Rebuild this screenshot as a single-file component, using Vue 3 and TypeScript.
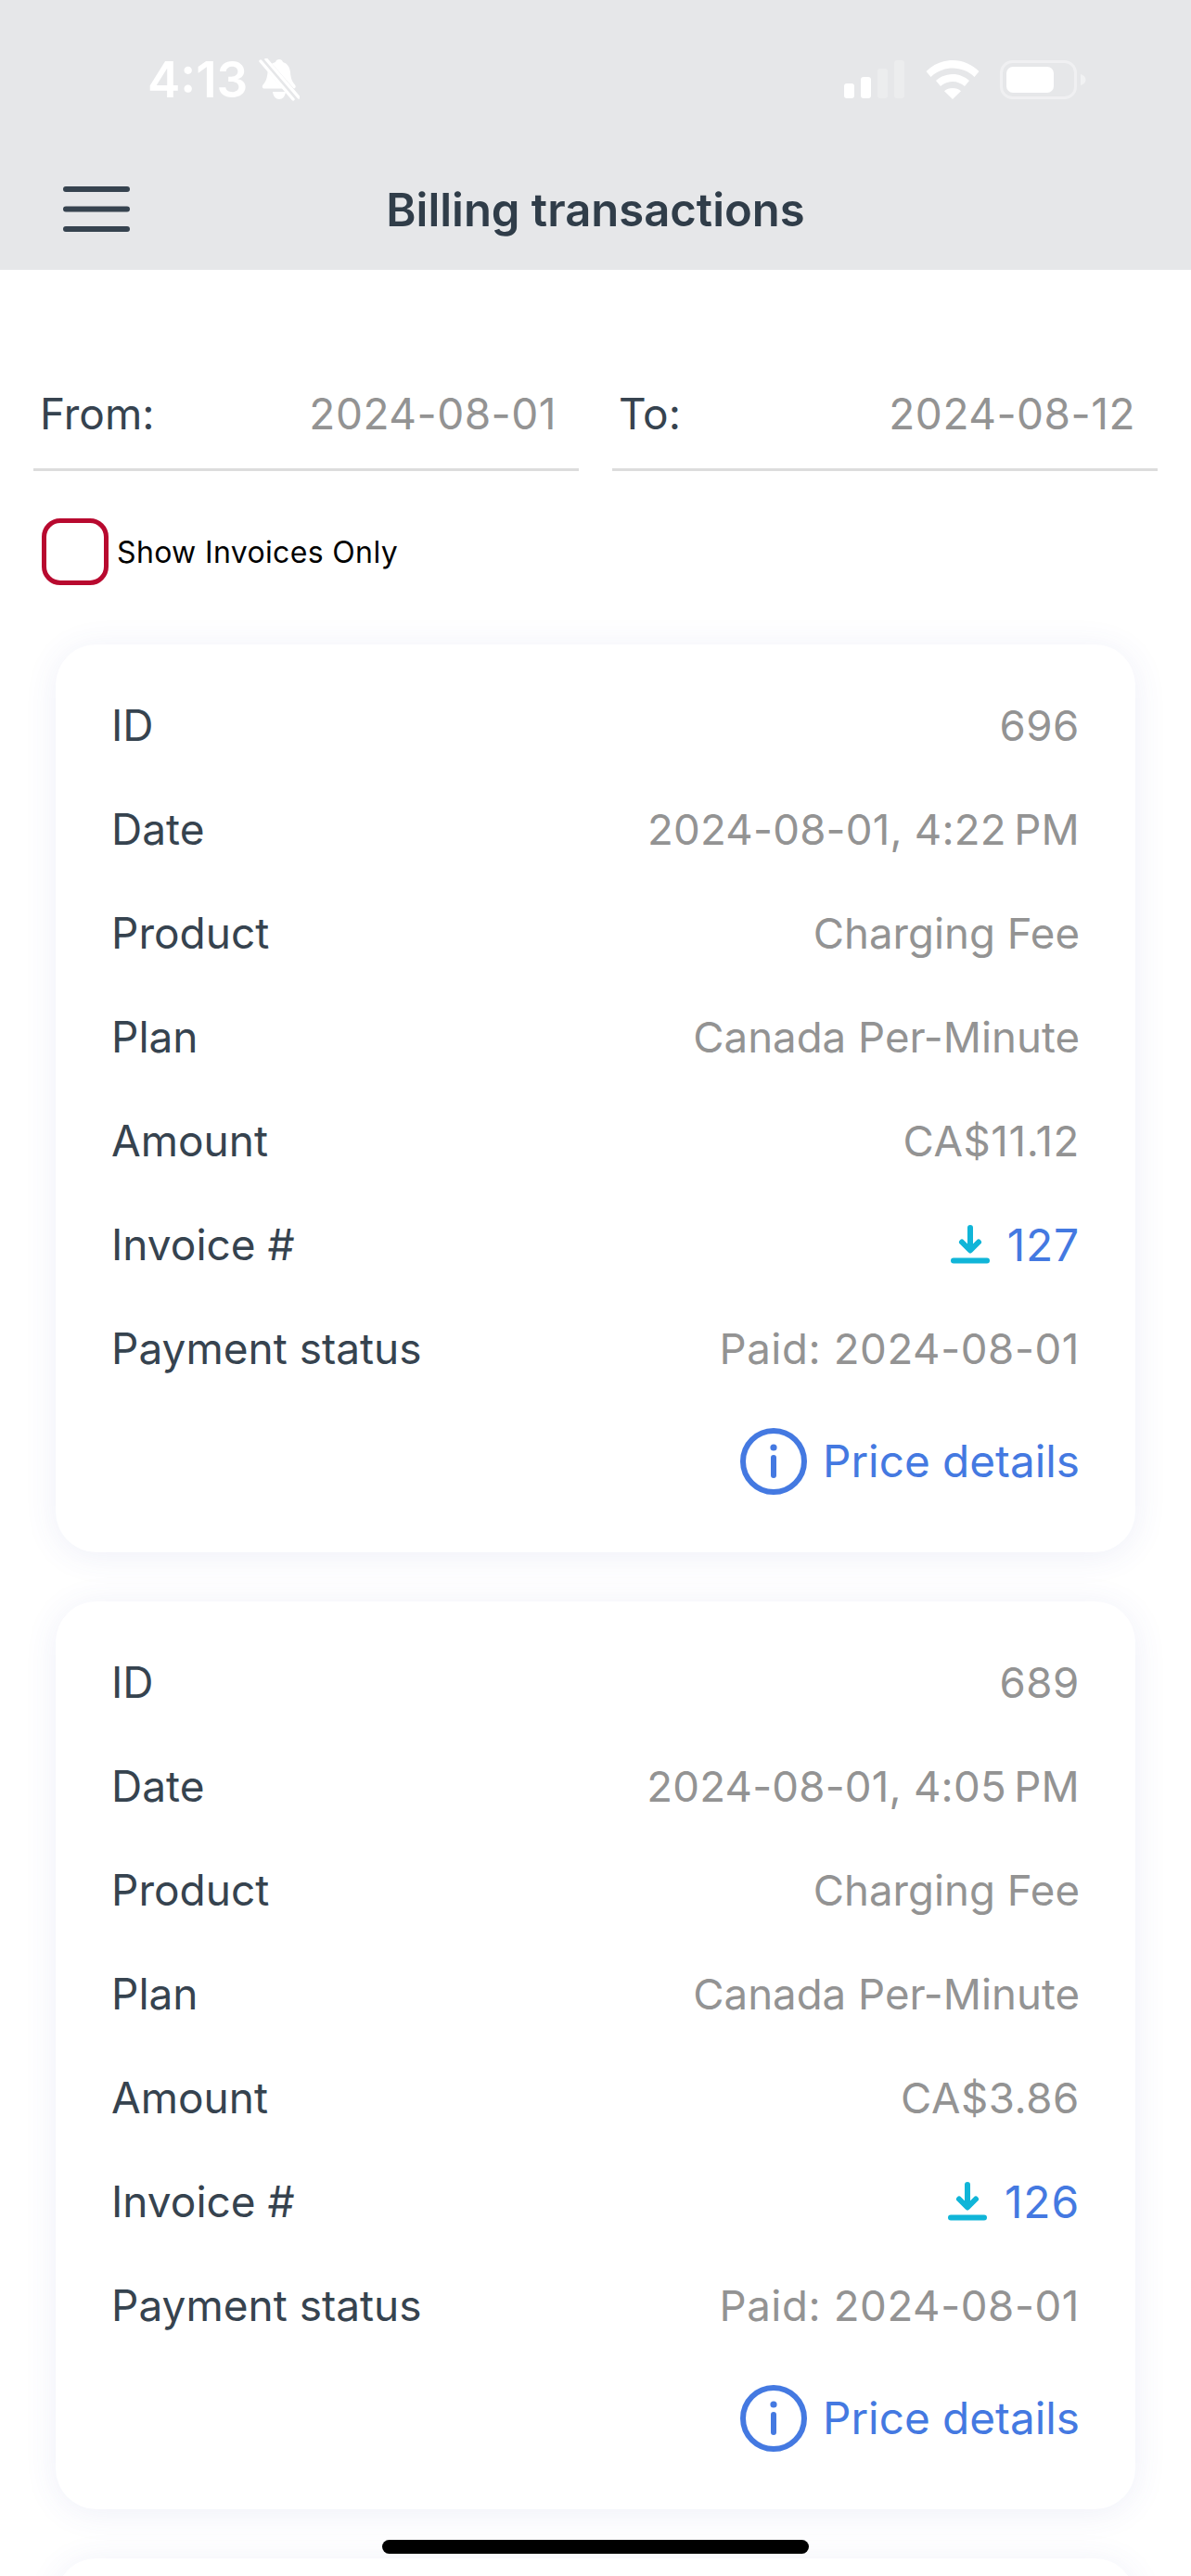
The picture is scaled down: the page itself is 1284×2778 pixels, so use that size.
<template>
  <div class="screen">
    <header class="app-header">
      <div class="status-bar">
        <div class="status-left">
          <span class="clock">4:13</span>
          <svg class="bell" width="44" height="46" viewBox="0 0 44 46">
            <path d="M22 1c2 0 3.500 1.200 4 3 5 1.500 7.500 5.500 8 11 .5 6 1.500 9.500 5 13.500 1.500 2 .5 4-1.500 4H6c-2 0-3-2-1.500-4C8 24.500 9 21 9.500 15c.5-5.500 3-9.500 8.500-11 .5-1.800 2-3 4-3z" fill="#fff" />
            <path d="M15 36h14c-.5 5-3.500 8-7 8s-6.500-3-7-8z" fill="#fff" />
            <path d="M5 2l35 40" stroke="#e6e7e9" stroke-width="9" />
            <path d="M2 3l35 41M8 1l35 41" stroke="#fff" stroke-width="3.400" stroke-linecap="round" />
          </svg>
        </div>
        <div class="status-right">
          <svg width="66" height="42" viewBox="0 0 66 42">
            <rect x="0" y="25" width="11" height="16" rx="3" fill="#fff" />
            <rect x="18" y="18" width="11" height="23" rx="3" fill="#fff" />
            <rect x="36" y="9" width="11" height="32" rx="3" fill="#fff" opacity="0.25" />
            <rect x="54" y="0" width="11" height="41" rx="3" fill="#fff" opacity="0.25" />
          </svg>
          <svg width="58" height="42" viewBox="0 0 58 42">
            <path d="M29 0c11 0 21 4.500 28.500 12l-5 6C46.500 12 38 8.500 29 8.500S11.500 12 5.500 18l-5-6C8 4.500 18 0 29 0z" fill="#fff" />
            <path d="M29 15c7 0 13 2.700 18 7l-5 6c-3.500-3-8-5-13-5s-9.500 2-13 5l-5-6c5-4.300 11-7 18-7z" fill="#fff" />
            <path d="M29 30c3.500 0 6.500 1.200 9 3.200L29 42l-9-8.800c2.500-2 5.500-3.200 9-3.200z" fill="#fff" />
          </svg>
          <svg width="94" height="42" viewBox="0 0 94 42">
            <rect x="1.500" y="1.500" width="80" height="39" rx="12" fill="none" stroke="#fff" stroke-opacity="0.4" stroke-width="3" />
            <rect x="7" y="7" width="51" height="28" rx="7" fill="#fff" />
            <path d="M87 15c3.500 1 5.500 3 5.500 6s-2 5-5.500 6z" fill="#fff" opacity="0.45" />
          </svg>
        </div>
      </div>
      <div class="nav-bar">
        <svg class="menu-icon" width="72" height="50" viewBox="0 0 72 50">
          <path d="M3 3h66M3 24.500h66M3 46h66" stroke="#36434f" stroke-width="6" stroke-linecap="round" />
        </svg>
        <h1 class="title">Billing transactions</h1>
      </div>
    </header>

    <div class="filters">
      <div class="date-field">
        <span class="date-label">From:</span>
        <span class="date-value">2024-08-01</span>
      </div>
      <div class="date-field">
        <span class="date-label">To:</span>
        <span class="date-value">2024-08-12</span>
      </div>
    </div>

    <label class="invoice-toggle">
      <span class="checkbox"></span>
      <span class="toggle-text">Show Invoices Only</span>
    </label>

    <div class="card-list">
      <section v-for="tx in transactions" :key="tx.id" class="card">
        <div class="row"><span class="row-label">ID</span><span class="row-value num">{{ tx.id }}</span></div>
        <div class="row"><span class="row-label">Date</span><span class="row-value date">{{ tx.date }}</span></div>
        <div class="row"><span class="row-label">Product</span><span class="row-value">Charging Fee</span></div>
        <div class="row"><span class="row-label">Plan</span><span class="row-value">Canada Per-Minute</span></div>
        <div class="row"><span class="row-label">Amount</span><span class="row-value num">{{ tx.amount }}</span></div>
        <div class="row">
          <span class="row-label">Invoice #</span>
          <span class="invoice-link">
            <svg width="42" height="42" viewBox="0 0 42 42">
              <path d="M21 3v24M12 18.500l9 9 9-9" fill="none" stroke="#10b5d8" stroke-width="6" stroke-linecap="round" stroke-linejoin="round" />
              <path d="M3 38.500h36" stroke="#10b5d8" stroke-width="6" stroke-linecap="round" />
            </svg>
            {{ tx.invoice }}
          </span>
        </div>
        <div class="row"><span class="row-label">Payment status</span><span class="row-value num">{{ tx.status }}</span></div>
        <div class="details">
          <svg width="72" height="72" viewBox="0 0 72 72">
            <circle cx="36" cy="36" r="33" fill="none" stroke="#4479e1" stroke-width="6" />
            <circle cx="36" cy="21" r="3.600" fill="#4479e1" />
            <path d="M36 32v19" stroke="#4479e1" stroke-width="6" stroke-linecap="round" />
          </svg>
          <span>Price details</span>
        </div>
      </section>
      <!-- next card only peeks in at the bottom of the screen -->
      <section class="card"></section>
    </div>

    <div class="home-bar"></div>
  </div>
</template>

<script setup lang="ts">
interface Transaction {
  id: number
  date: string
  amount: string
  invoice: number
  status: string
}

const transactions: Transaction[] = [
  { id: 696, date: '2024-08-01, 4:22\u202fPM', amount: 'CA$11.12', invoice: 127, status: 'Paid: 2024-08-01' },
  { id: 689, date: '2024-08-01, 4:05\u202fPM', amount: 'CA$3.86', invoice: 126, status: 'Paid: 2024-08-01' }
]
</script>

<style>
html,
body {
  margin: 0;
  background: #fff;
}
</style>

<style scoped>
.screen {
  position: relative;
  width: 1284px;
  height: 2778px;
  overflow: hidden;
  background: #fff;
  font-family: Inter, "Liberation Sans", sans-serif;
  color: #36434f;
}

.app-header {
  height: 291px;
  box-sizing: border-box;
  background: #e6e7e9;
}

.status-bar {
  display: flex;
  justify-content: space-between;
  align-items: center;
  height: 172px;
  box-sizing: border-box;
  padding: 0 112px 0 159px;
}

.status-left {
  display: flex;
  align-items: center;
  gap: 12px;
}

.clock {
  font-size: 53px;
  font-weight: 600;
  color: #fff;
}

.status-right {
  display: flex;
  align-items: center;
  gap: 22px;
}

.nav-bar {
  position: relative;
  height: 119px;
  box-sizing: border-box;
  padding-bottom: 10px;
  display: flex;
  align-items: center;
  justify-content: center;
}

.menu-icon {
  position: absolute;
  left: 68px;
  top: 29px;
}

.title {
  margin: 0;
  font-size: 49px;
  font-weight: 600;
  color: #303d49;
}

.filters {
  display: flex;
  gap: 36px;
  padding: 96px 36px 0;
}

.date-field {
  flex: 1;
  display: flex;
  justify-content: space-between;
  align-items: center;
  height: 121px;
  box-sizing: border-box;
  padding: 0 24px 0 7px;
  border-bottom: 3px solid #dcdcdc;
  font-size: 46px;
}

.date-value {
  color: #939393;
  letter-spacing: 0.5px;
}

.invoice-toggle {
  display: flex;
  align-items: center;
  gap: 9px;
  margin: 51px 0 0 45px;
}

.checkbox {
  width: 72px;
  height: 72px;
  box-sizing: border-box;
  border: 5px solid #b8092f;
  border-radius: 20px;
}

.toggle-text {
  font-size: 32px;
  letter-spacing: 0.35px;
  color: #000;
}

.card-list {
  display: flex;
  flex-direction: column;
  gap: 53px;
  padding: 64px 60px 0;
}

.card {
  flex: none;
  box-sizing: border-box;
  height: 979px;
  padding: 31px 60px 0;
  border-radius: 44px;
  background: #fff;
  box-shadow: 0 4px 36px rgba(70, 80, 180, 0.09);
}

.row {
  display: flex;
  justify-content: space-between;
  align-items: center;
  height: 112px;
  font-size: 46px;
}

.row-value {
  color: #939393;
  font-size: 45.600px;
}

.row-value.num {
  letter-spacing: 0.6px;
}

.row-value.date {
  letter-spacing: 0.2px;
}

.invoice-link {
  display: flex;
  align-items: center;
  gap: 19px;
  color: #4479e1;
  font-size: 48px;
  letter-spacing: 0.8px;
}

.details {
  display: flex;
  justify-content: flex-end;
  align-items: center;
  gap: 17px;
  height: 132px;
  font-size: 47.700px;
  color: #4479e1;
}

.home-bar {
  position: absolute;
  left: 412px;
  top: 2739px;
  width: 460px;
  height: 15px;
  border-radius: 8px;
  background: #000;
}
</style>
